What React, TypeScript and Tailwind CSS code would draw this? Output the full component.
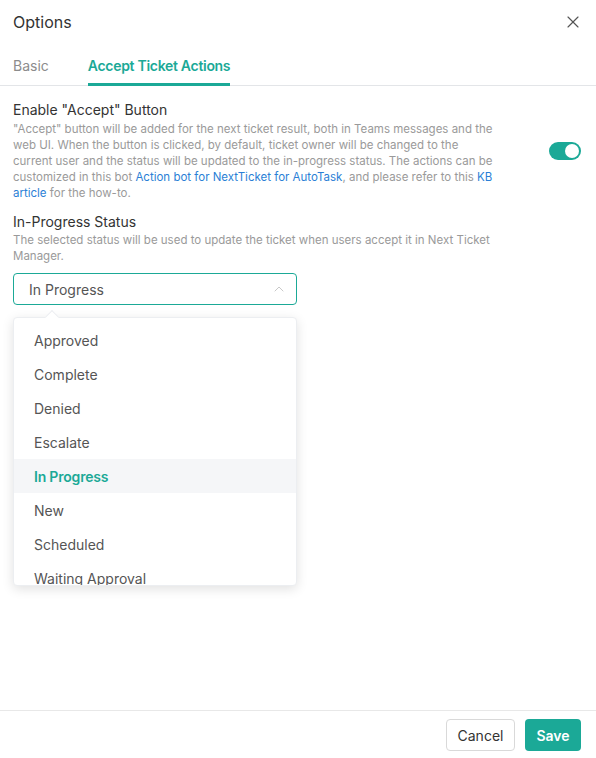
import { X, ChevronUp } from 'lucide-react';

const statuses = ['Approved', 'Complete', 'Denied', 'Escalate', 'In Progress', 'New', 'Scheduled', 'Waiting Approval'];

export default function App() {
  const selected = 'In Progress';

  return (
    <div className="h-[758px] w-[596px] bg-white flex flex-col font-['Inter','Noto_Sans',sans-serif] text-[#333]">
      {/* Header */}
      <div className="h-[44px] flex items-center justify-between pl-[13px] pr-[13px]">
        <h2 className="text-[16px] leading-[20px] text-[#333]">Options</h2>
        <X className="w-[20px] h-[20px] text-[#555]" strokeWidth={1.4} />
      </div>

      {/* Tabs */}
      <div className="mt-[4px] flex gap-[39px] px-[13px] border-b border-[#e3e5e8]">
        <div className="pt-[8px] pb-[8px] text-[14px] leading-[20px] text-[#8c8c8c]">Basic</div>
        <div className="pt-[8px] pb-[7px] -mb-px text-[14px] leading-[20px] font-semibold tracking-[-0.3px] text-[#1ba997] border-b-[3px] border-[#1ba997]">
          Accept Ticket Actions
        </div>
      </div>

      {/* Content */}
      <div className="px-[13px] pt-[14px] relative">
        <div className="flex items-center justify-between">
          <div className="w-[484px]">
            <div className="text-[14px] leading-[20px] text-[#333]">Enable "Accept" Button</div>
            <p className="mt-px text-[11.5px] leading-[16px] text-[#9a9a9a]">
              "Accept" button will be added for the next ticket result, both in Teams messages and the web UI. When the
              button is clicked, by default, ticket owner will be changed to the current user and the status will be
              updated to the in-progress status. The actions can be customized in this bot{' '}
              <span className="text-[#2b7fd6]">Action bot for NextTicket for AutoTask</span>, and please refer to this{' '}
              <span className="text-[#2b7fd6]">KB article</span> for the how-to.
            </p>
          </div>
          <div className="mr-[2px] w-[32px] h-[18px] rounded-full bg-[#1ba997] flex items-center justify-end pr-[2px]">
            <div className="w-[14px] h-[14px] rounded-full bg-white" />
          </div>
        </div>

        <div className="mt-[11px] text-[14px] leading-[20px] text-[#333]">In-Progress Status</div>
        <p className="text-[11.5px] leading-[16px] text-[#9a9a9a] w-[495px]">
          The selected status will be used to update the ticket when users accept it in Next Ticket Manager.
        </p>

        <div className="mt-[9px] w-[284px] h-[32px] rounded-[4px] border border-[#1ba997] flex items-center justify-between pl-[15px] pr-[9px]">
          <span className="text-[14px] text-[#555]">{selected}</span>
          <ChevronUp className="w-[16px] h-[16px] text-[#c4c4c4]" strokeWidth={1.4} />
        </div>

        {/* Dropdown */}
        <div className="absolute left-[13px] top-[231px] w-[284px] h-[269px] bg-white rounded-[4px] border border-[#eceef1] shadow-[0_3px_12px_rgba(0,0,0,0.12)] overflow-hidden pt-[5px]">
          {statuses.map(s => (
            <div
              key={s}
              className={`h-[34px] flex items-center pl-[20px] text-[14px] ${
                s === selected ? 'bg-[#f5f6f8] text-[#1ba997] font-semibold tracking-[-0.2px]' : 'text-[#555]'
              }`}
            >
              {s}
            </div>
          ))}
        </div>
        <div className="absolute left-[47px] top-[226px] w-[10px] h-[10px] rotate-45 bg-white border-l border-t border-[#eceef1]" />
      </div>

      {/* Footer */}
      <div className="mt-auto h-[48px] border-t border-[#e8e8e8] flex items-start justify-end gap-[10px] pt-[8px] pr-[15px]">
        <button className="h-[32px] w-[69px] rounded-[4px] border border-[#d9d9d9] bg-white text-[14px] text-[#333]">
          Cancel
        </button>
        <button className="h-[32px] w-[56px] rounded-[4px] bg-[#1ba997] text-[14px] font-semibold text-white">Save</button>
      </div>
    </div>
  );
}
